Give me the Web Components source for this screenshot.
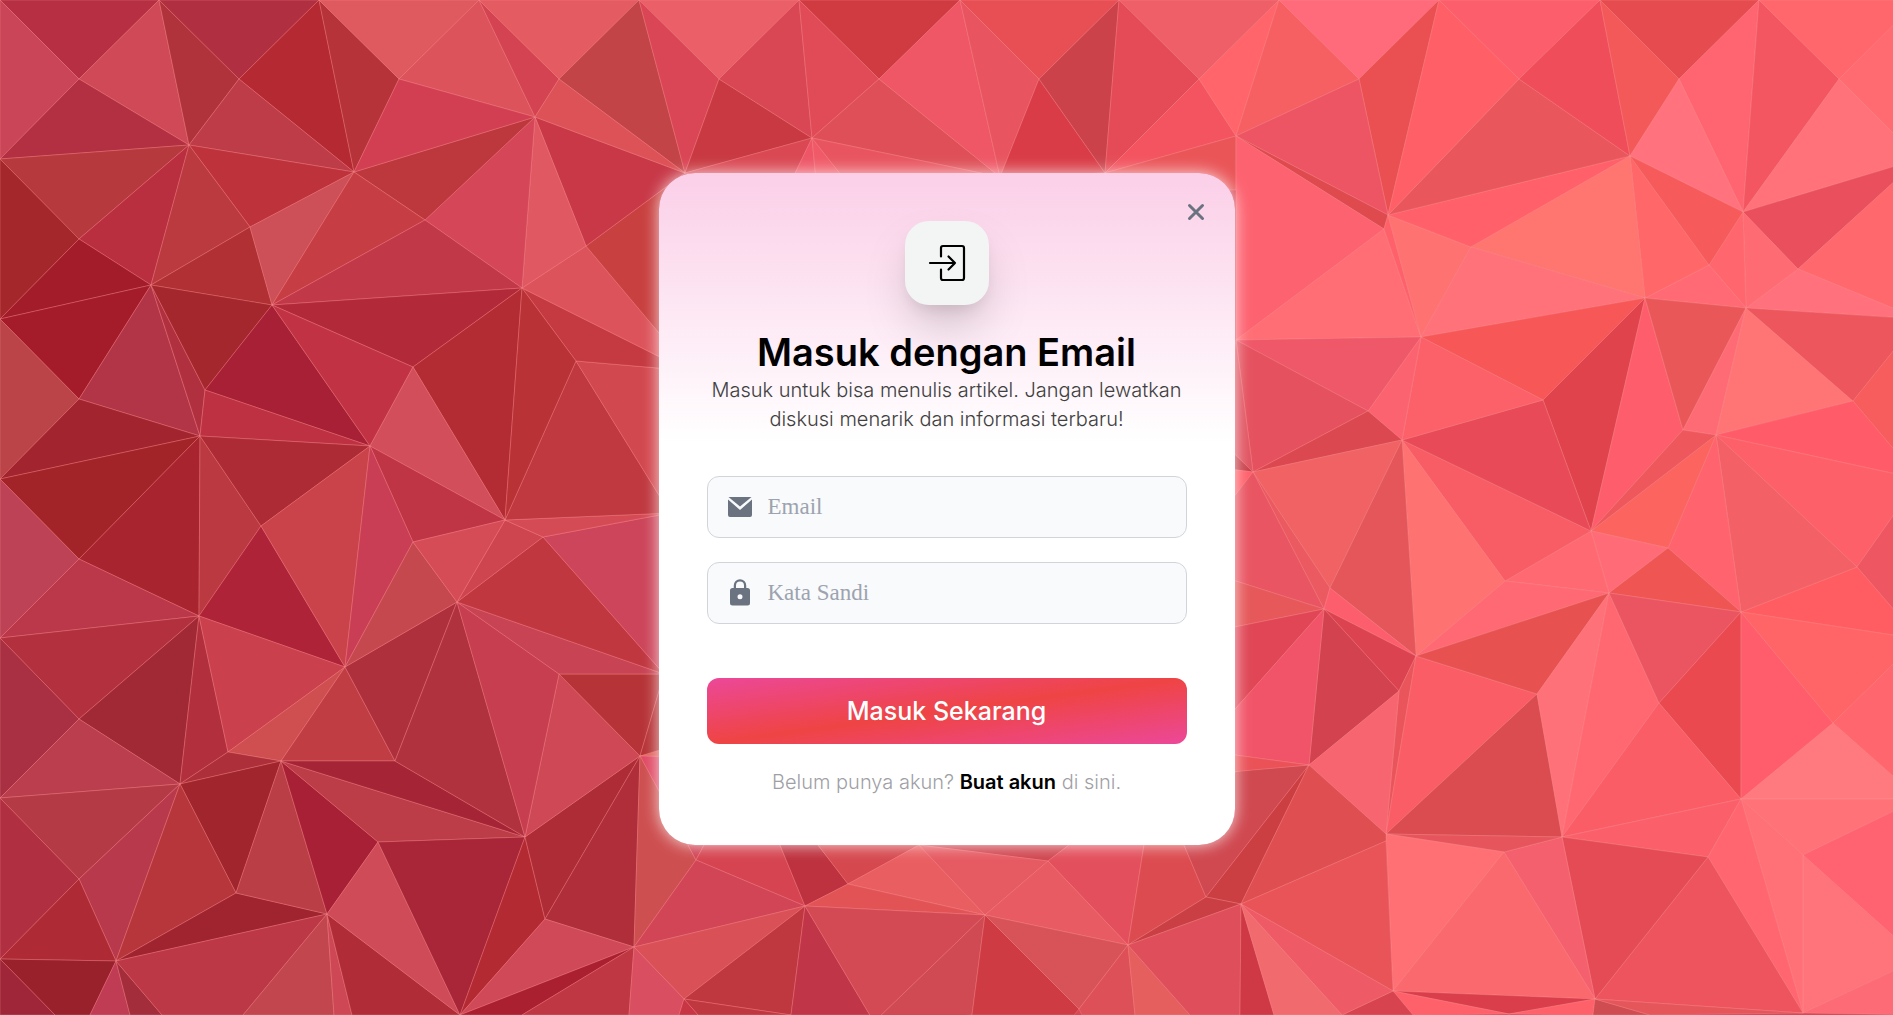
<!DOCTYPE html>
<html lang="id">
<head>
<meta charset="utf-8">
<meta name="viewport" content="width=device-width, initial-scale=1">
<title>Masuk dengan Email</title>
<style>
  html, body { margin: 0; height: 100%; }
  body { font-family: Inter, "Noto Sans", sans-serif; background: #d94855; }
</style>
</head>
<body>
<login-page></login-page>

<script>
/* Low-poly backdrop: named mesh points, then one "points colour" entry per facet. */
const POINTS = {
  T0:[0,0],T1:[159,0],T2:[319,0],T3:[479,0],T4:[639,0],T5:[799,0],T6:[960,0],T7:[1119,0],T8:[1279,0],T9:[1439,0],T10:[1600,0],T11:[1759,0],T12:[1919,0],
  M0:[79,79],M1:[239,79],M2:[399,79],M3:[559,79],M4:[719,79],M5:[879,79],M6:[1039,79],M7:[1199,79],M8:[1359,79],M9:[1519,79],M10:[1679,79],M11:[1839,79],
  L1:[0,159],L2:[0,319],L3:[0,479],L4:[0,638],L5:[0,798],L6:[0,959],
  N1:[79,239],N2:[79,399],N3:[79,559],N4:[79,719],N5:[79,879],
  A:[189,145],B:[250,227],C:[151,285],D:[272,305],E:[354,172],F:[535,117],G:[425,220],H:[522,288],I:[586,246],J:[685,173],
  K:[205,390],P:[200,436],Q:[261,526],R:[370,446],S:[413,367],U:[505,520],V:[576,361],W:[413,542],X:[543,537],Y:[457,602],Z:[199,616],
  a:[345,667],b:[559,674],c:[664,674],d:[670,513],e:[180,784],f:[228,752],g:[281,761],h:[236,893],i:[327,914],j:[116,961],k:[395,761],
  l:[525,837],m:[378,842],n:[460,1015],o:[545,919],p:[634,947],q:[640,756],
  r:[696,860],s:[805,906],t:[848,884],u:[985,915],v:[919,845],w:[1048,861],x:[1128,945],y:[1206,897],z:[1241,904],aa:[684,999],ab:[1079,1009],ad:[874,1022],
  J2:[812,138],V2:[1000,177],V3:[1105,173],
  a1:[1236,136],b1:[1388,215],b2:[1384,229],c1:[1471,247],d1:[1421,337],e1:[1630,156],f1:[1743,212],g1:[1709,265],h1:[1645,298],i1:[1746,308],j1:[1798,269],k1:[1236,340],
  l1:[1368,411],m1:[1253,472],n1:[1402,440],o1:[1543,400],p1:[1591,531],q1:[1683,430],r1:[1716,435],s1:[1853,401],t1:[1857,567],u1:[1741,612],v1:[1668,548],w1:[1609,593],
  x1:[1505,581],y1:[1416,656],z1:[1324,609],a2:[1330,588],b3:[1833,723],c2:[1741,799],d2:[1803,855],e2:[1708,857],f2:[1562,837],g2:[1504,852],h2:[1386,834],h3:[1386,841],
  i2:[1309,765],j2:[1399,691],k2:[1537,694],l2:[1659,703],m2:[1393,991],n2:[1595,999],o2:[1803,1013],p2:[1509,1014],
  R1:[1919,159],R2:[1919,319],R3:[1919,479],R4:[1919,639],R5:[1919,799],R6:[1919,959]
};
const FACETS = `
T0 M0 T1 b62f42|T0 M0 L1 ca4558|T1 M0 A cf4956|M0 L1 A b32f42|T1 A M1 b0333c|T1 M1 T2 b02f40|M1 T2 E b42932|M1 A E be3c48|T2 E M2 b63339|T2 M2 T3 df5a5f
A E B be323b|L1 A N1 b6393d|L1 N1 L2 a4272c|N1 A C b92f40|A C B bb3a40|C B D b03034|B E D cd4f58|N1 L2 C a21c2a|L2 C N2 a41c2a|L2 N2 L3 ba4447
C N2 P b23547|C K P b13040|C D K a3272c|D K R a82035|K P R be3142|N2 L3 P a1242e|L3 N3 P a32428|P N3 Z a8252f|P Z Q bb3940|P Q R ad2b34
Q Z a ae2338|Q R a cb434a|L3 N3 L4 be4256|N3 L4 Z bb374a|L4 Z N4 b3303e|L4 N4 L5 a93042|Z N4 e a12936|Z e f b2303d|Z f a ca404d|f g a cf4f50
e f g ac2f39|a g k c13d44|e g h a0252c|N4 L5 e bb3e4e|L5 N5 e b43a45|L5 N5 L6 b03042|N5 e j b8394b|N5 L6 j ae2b35|e j h b6363b|h j i a0242f
g h i ba3e46|g i m a82035|g m l bc3c48|g k l a52436|k a Y ae303c|k Y l b0323e|L6 j 90,1015 55,1015 98212b|L6 55,1015 0,1015 9f2639
j 90,1015 130,1015 c03b54|j 130,1015 162,1015 a32d3b|j i 243,1015 162,1015 bc3846|i 243,1015 334,1015 c2464e|i 334,1015 352,1015 cd4854|i n 352,1015 b02d38
i m n cf4b58|m l n a82638|l n o b42a33|l o q ae2c36|o q p b02d3a|o p n d04958|n p 522,1015 aa2030|p 522,1015 629,1015 c03744|l q b cf4856|Y b l c73e51
b q c b63337|Y b c c84353|Y X c c03740|X d c cd455a|U X Y cf454f|U d X d54b55|U d V c03840|V d 670,369 d2484f|H V 670,369 670,362 c53940|H I 670,346 670,362 dd535b
I J 670,346 c94040|F J I c83847|F I H e05862|F H G d54658|E F G bd383d|E G D c63e44|G H D c13849|D H S b22a39|D S R c13344|S H U b42c33
H U V b93235|S R U d14e5a|R U W bf3545|R W a c93e54|W a Y c5484e|U W Y d54b56|M2 T3 F dc535c|T3 F M3 d44352|T3 M3 T4 e55b62|M3 T4 J c34447|M3 F J dc5257|M2 F E d23f52
q c 680,748 b63337|q 680,744 680,757 e0605a|q 680,757 680,830 e04a65|q p r 688,845 ce4f50
T4 M4 T5 ea5f68|T4 J M4 da4656|M4 J J2 c93941|M4 T5 J2 d84753|T5 M5 T6 d03b42|T5 J2 M5 e14b58|J2 M5 V2 df4f57|T6 M5 V2 ef5766|T6 M6 T7 e84f55|T6 V2 M6 e85560
M6 V2 V3 d93c46|M6 T7 V3 cc424b|T7 M7 T8 ee5f68|T7 M7 V3 e54b56|M7 V3 a1 f3545f|M7 T8 a1 ff656b|V3 a1 1236,190 1105,190 ea5558
J J2 787,190 d94853|J2 787,190 817,190 ee5566|J2 817,190 853,190 f05a68|J2 853,190 V2 e85560|V2 V3 1105,190 1000,190 da4450
r 688,845 704,845 d04455|r 704,845 780,845 s d54450|s t 818,845 780,845 be313e|t 818,845 v d5484e|t v u e95e61|s t u e25356|v w 1069,845 d04650|v w u e65a62
w 1069,845 1144,845 x e34f5c|w u x e85b63|x 1144,845 1184,845 y dc4b4f|y 1184,845 1236,771 i2 d04850|i2 y z cb3f42|z y x c93f44|p r s d14557|p s aa d95156
aa s 791,1015 c0383f|aa 791,1015 698,1015 c0383f|s 791,1015 870,1015 ad c13548|s u ad d34a54|u ad 972,1015 d04a54|u 972,1015 1074,1015 ab ce3b43|u x ab d85357
x ab 1082,1015 1135,1015 dd5057|x 1135,1015 1190,1015 e65f5f|x z 1240,1015 1190,1015 de4f5b|z 1240,1015 1274,1015 cf3845|p 629,1015 679,1015 aa d94e60|aa 679,1015 698,1015 c83545
T8 M8 a1 f66062|T8 M8 T9 ff6b7b|M8 T9 b1 ea4f51|M8 a1 b1 ed5564|a1 b1 b2 de4a4d|a1 b2 k1 fd6270|b2 k1 d1 ff6e75|b1 b2 d1 ff616b|b1 c1 d1 ff7272|b1 c1 e1 ff606a
b1 M9 e1 e9575c|T9 M9 b1 ff6067|T9 M9 T10 fd5e6c|M9 T10 e1 f04d5a|T10 M10 e1 f45959|T10 M10 T11 e64c4f|M10 T11 f1 ff6571|M10 e1 f1 ff727e|T11 M11 f1 f45661
T11 T12 M11 ff676d|M11 T12 R1 ff6b70|M11 R1 f1 ff727a|f1 R1 j1 e94f5c|j1 R1 R2 ff696e|j1 R2 i1 ff717d|i1 f1 j1 ff6b73|f1 g1 i1 ff666d|g1 h1 i1 ff6a74
e1 g1 h1 ff6769|e1 f1 g1 f65a5a|c1 e1 h1 ff7570|c1 h1 d1 ff727a|h1 d1 o1 f75757|h1 o1 p1 e1434d|h1 p1 q1 fe5e6c|h1 q1 i1 ea5759|q1 i1 r1 ff6b75|i1 r1 s1 ff7575
i1 s1 R2 ec565c|s1 R2 R3 f65d5c|s1 r1 R3 ff5b68|r1 R3 t1 fd6068|t1 R3 R4 ee5662|t1 u1 R4 ff5d62|r1 t1 u1 f36167|r1 v1 u1 ff636e|r1 p1 v1 fc6460|r1 q1 p1 ee575c
p1 v1 w1 ff6b76|v1 w1 u1 ee5553|p1 x1 w1 ff6a72|x1 w1 y1 ff6973|n1 p1 x1 f85d65|n1 x1 y1 ff7272|n1 o1 p1 e84b57|d1 o1 n1 fc6068|d1 l1 n1 fc6370|k1 d1 l1 ef5868
k1 l1 m1 e5515f|l1 m1 n1 dc484f|m1 n1 a2 f06264|m1 a2 z1 ea5a60|n1 a2 y1 e45659|a2 z1 y1 fd5e6d|z1 y1 j2 dc4350|z1 j2 i2 d3424f|y1 j2 h2 e9555b|j2 i2 h2 f76570
k1 m1 1220,440 e05562|m1 1220,440 1220,468 c8404a|m1 1220,468 1220,515 ff5f6a|m1 z1 1220,576 1220,515 e95562|z1 1220,576 1220,630 e6585a|z1 1220,630 1220,726 e04656
z1 i2 1220,753 1220,726 f15468|i2 1220,753 1220,773 ea5258
y1 k2 h2 fb5d67|y1 w1 k2 e75251|k2 h2 f2 da4c50|w1 k2 f2 ff7178|w1 f2 l2 ff6870|w1 u1 l2 eb5461|l2 u1 c2 e9494f|l2 c2 f2 fb5d67|c2 f2 e2 fa5f6a|c2 u1 b3 ff5d6b
u1 b3 R4 ff6466|b3 R4 R5 ff666e|c2 b3 R5 ff7a7e|c2 R5 d2 ff7278|d2 R5 R6 ff6371|d2 R6 o2 ff737a|c2 d2 o2 ff7177|c2 e2 o2 ff6670|e2 o2 n2 ee545d|e2 f2 n2 e54b54
f2 g2 n2 f5606f|g2 h2 f2 e6555c|h2 g2 m2 ff7074|g2 m2 n2 fa696d|i2 h2 h3 z df4e51|z h3 m2 e95459|m2 n2 p2 d93e4a|m2 p2 1413,1015 ff616b|p2 n2 1593,1015 ff616b
n2 1593,1015 1650,1015 cf4c50|n2 1650,1015 o2 e5565b|o2 R6 1919,1015 fd6b76|m2 1342,1015 1413,1015 d74450|z 1342,1015 m2 ee5b67|z 1274,1015 1342,1015 f16b6e`;

class PolyBackdrop extends HTMLElement {
  connectedCallback() {
    const root = this.attachShadow({ mode: "open" });
    const shapes = FACETS.trim().split(/[|\n]/).map(row => {
      const parts = row.trim().split(" ");
      const fill = parts.pop();
      const pts = parts.map(k => POINTS[k] ? POINTS[k].join(",") : k).join(" ");
      return `<polygon points="${pts}" fill="#${fill}"/>`;
    }).join("");
    root.innerHTML = `
      <style>
        :host { display: block; overflow: hidden; }
        svg { display: block; width: 100%; height: 100%; }
        polygon { stroke: #ff9a9a; stroke-opacity: .3; stroke-width: 1; stroke-linejoin: round; }
      </style>
      <svg viewBox="0 0 1893 1015" preserveAspectRatio="xMidYMid slice" aria-hidden="true">${shapes}</svg>`;
  }
}

class IconTile extends HTMLElement {
  connectedCallback() {
    this.attachShadow({ mode: "open" }).innerHTML = `
      <style>
        :host { display: flex; align-items: center; justify-content: center; width: 84px; height: 84px;
          border-radius: 24px; background: #f3f4f4;
          box-shadow: 0 25px 50px -12px rgba(0,0,0,.25), 0 8px 16px -6px rgba(0,0,0,.1); }
        svg { display: block; }
      </style>
      <svg width="40" height="40" viewBox="0 0 40 40" fill="none" stroke="#000" stroke-width="2.2" stroke-linecap="round" stroke-linejoin="round" aria-hidden="true">
        <path d="M14 13.500V5a2 2 0 0 1 2-2h19a2 2 0 0 1 2 2v30a2 2 0 0 1-2 2H16a2 2 0 0 1-2-2v-8.500"/>
        <path d="M3 20h25M21.500 13.500L28 20l-6.500 6.500"/>
      </svg>`;
  }
}

class IconField extends HTMLElement {
  connectedCallback() {
    const icons = {
      mail: `<path d="M3.500 5h23L15 14.500z"/><path d="M3 7.500l12 10.500 12-10.500V23a2 2 0 0 1-2 2H5a2 2 0 0 1-2-2z"/>`,
      lock: `<path fill-rule="evenodd" d="M22.500 10H21.250V7.500a6.250 6.250 0 0 0-12.500 0V10H7.500A2.500 2.500 0 0 0 5 12.500V25a2.500 2.500 0 0 0 2.500 2.500h15A2.500 2.500 0 0 0 25 25V12.500A2.500 2.500 0 0 0 22.500 10zM11 10V7.500a4 4 0 0 1 8 0V10zM15 21.250a2.500 2.500 0 1 1 0-5 2.500 2.500 0 0 1 0 5z"/>`
    };
    const text = this.getAttribute("placeholder");
    this.attachShadow({ mode: "open" }).innerHTML = `
      <style>
        :host { display: flex; align-items: center; gap: 13px; box-sizing: border-box; height: 62px; padding: 0 17px;
          border: 1px solid #d1d5db; border-radius: 12px; background: #f9fafb; }
        label, svg { display: block; }
        svg { fill: #6b7280; }
        input { flex: 1; min-width: 0; height: 100%; padding: 0; border: 0; outline: 0; background: none;
          font: 23px/28px "Liberation Serif", serif; color: #111827; }
        input::placeholder { color: #9ca3af; opacity: 1; }
      </style>
      <label for="box"><svg width="30" height="30" viewBox="0 0 30 30" aria-hidden="true">${icons[this.getAttribute("icon")]}</svg></label>
      <input id="box" type="${this.getAttribute("type")}" placeholder="${text}" aria-label="${text}">`;
  }
}

class SubmitButton extends HTMLElement {
  connectedCallback() {
    this.attachShadow({ mode: "open" }).innerHTML = `
      <style>
        :host { display: block; }
        button { display: block; width: 100%; height: 66px; border: 0; border-radius: 12px; color: #fff; cursor: pointer;
          font: 500 25px/32px Inter, "Noto Sans", sans-serif;
          background: linear-gradient(to bottom right, #ec4899, #ef4444, #ec4899); }
      </style>
      <button type="submit"><slot></slot></button>`;
  }
}

class CloseButton extends HTMLElement {
  connectedCallback() {
    this.attachShadow({ mode: "open" }).innerHTML = `
      <style>
        :host { display: block; }
        button { display: block; width: 32px; height: 32px; padding: 0; border: 0; background: none; cursor: pointer; }
        svg { display: block; }
      </style>
      <button type="button" aria-label="Tutup">
        <svg width="32" height="32" viewBox="0 0 32 32" fill="none" stroke="#6b7280" stroke-width="3" stroke-linecap="round" aria-hidden="true"><path d="M9.500 9.500l13 13M22.500 9.500l-13 13"/></svg>
      </button>`;
  }
}

class LoginCard extends HTMLElement {
  connectedCallback() {
    this.attachShadow({ mode: "open" }).innerHTML = `
      <style>
        :host { position: relative; display: block; box-sizing: border-box; width: 100%; max-width: 576px; padding: 48px;
          border-radius: 36px; background: linear-gradient(to bottom, #fbcfe8, #fff 40%);
          box-shadow: 0 0 16px rgba(255,255,255,.8); }
        close-button { position: absolute; top: 23px; right: 23px; }
        header { display: flex; flex-direction: column; align-items: center; text-align: center; }
        h1 { margin: 27px 0 0; font-size: 38px; line-height: 40px; font-weight: 600; color: #000; }
        header p { margin: 4px 0 0; font-size: 20px; line-height: 29px; font-weight: 300; color: #404040; }
        form { display: flex; flex-direction: column; gap: 24px; margin-top: 42px; }
        submit-button { margin-top: 30px; }
        footer { margin-top: 24px; text-align: center; font-size: 20px; line-height: 29px; font-weight: 300; color: #9f9fa6; }
        a { color: #000; font-weight: 600; text-decoration: none; }
      </style>
      <close-button></close-button>
      <header>
        <icon-tile></icon-tile>
        <h1>Masuk dengan Email</h1>
        <p>Masuk untuk bisa menulis artikel. Jangan lewatkan diskusi menarik dan informasi terbaru!</p>
      </header>
      <form>
        <icon-field icon="mail" type="email" placeholder="Email"></icon-field>
        <icon-field icon="lock" type="password" placeholder="Kata Sandi"></icon-field>
        <submit-button>Masuk Sekarang</submit-button>
      </form>
      <footer>Belum punya akun? <a href="#daftar">Buat akun</a> di sini.</footer>`;
  }
}

class LoginPage extends HTMLElement {
  connectedCallback() {
    this.attachShadow({ mode: "open" }).innerHTML = `
      <style>
        :host { display: grid; min-height: 100%; }
        poly-backdrop, main { grid-area: 1 / 1; min-width: 0; min-height: 0; }
        poly-backdrop { contain: size; }
        main { position: relative; display: flex; align-items: center; justify-content: center; padding: 24px; padding-top: 27px; }
      </style>
      <poly-backdrop></poly-backdrop>
      <main><login-card></login-card></main>`;
  }
}

customElements.define("poly-backdrop", PolyBackdrop);
customElements.define("icon-tile", IconTile);
customElements.define("icon-field", IconField);
customElements.define("submit-button", SubmitButton);
customElements.define("close-button", CloseButton);
customElements.define("login-card", LoginCard);
customElements.define("login-page", LoginPage);
</script>
</body>
</html>
